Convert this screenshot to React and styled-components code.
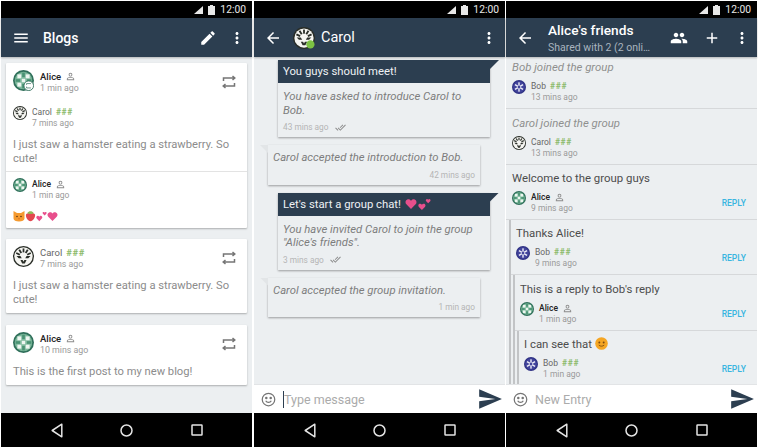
import React from 'react';
import styled, { createGlobalStyle } from 'styled-components';

const GlobalStyle = createGlobalStyle`
  html, body { margin: 0; padding: 0; background: #fff; }
  * { box-sizing: border-box; }
  body { font-family: Roboto, "Liberation Sans", sans-serif; }
`;

const Page = styled.div`
  width: 758px;
  height: 448px;
  padding: 1px;
  display: flex;
  overflow: hidden;
  background: #fff;
`;

const Screen = styled.div`
  width: 251px;
  flex: none;
  display: flex;
  flex-direction: column;
  background: #eceff1;
  &:nth-child(2) { margin: 0 1px 0 2px; }
`;

const StatusBar = styled.div`
  height: 17px;
  flex: none;
  background: #000;
  display: flex;
  align-items: center;
  justify-content: flex-end;
  gap: 5px;
  padding-right: 6px;
  color: #e8e8e8;
  font-size: 10.3px;
  svg { display: block; }
`;

const Toolbar = styled.div`
  height: 39px;
  flex: none;
  background: #2c3e50;
  color: #fff;
  display: flex;
  align-items: center;
  position: relative;
  z-index: 2;
  box-shadow: 0 1px 2px rgba(0, 0, 0, 0.25);
`;

const ToolIcon = styled.svg`
  width: 18px;
  height: 18px;
  fill: #fff;
  flex: none;
  display: block;
`;

const ToolSlot = styled.div`
  width: ${(p) => p.$width}px;
  flex: none;
  display: flex;
  justify-content: center;
`;

const Title = styled.div`
  font-size: 14px;
  font-weight: 500;
  flex: 1;
  min-width: 0;
  margin-left: 2px;
`;

const ContactTitle = styled(Title)`
  margin-left: 6px;
  font-size: 14.5px;
  font-weight: 400;
`;

const ToolAvatar = styled.div`
  flex: none;
  margin-left: 1px;
`;

const GroupTitle = styled.div`
  flex: 1;
  min-width: 0;
  margin-left: 4px;
  padding-top: 2px;
  line-height: 1;
  strong { display: block; font-size: 13.7px; font-weight: 500; margin-bottom: 5px; }
  span { display: block; font-size: 10.5px; color: #a9b4bf; }
`;

const Content = styled.div`
  flex: 1;
  min-height: 0;
  overflow: hidden;
  display: flex;
  flex-direction: column;
`;

const Blogs = styled(Content)`
  padding: 6px 5px 0;
  gap: 11px;
`;

const Card = styled.div`
  background: #fff;
  border-radius: 1px;
  box-shadow: 0 1px 2px rgba(0, 0, 0, 0.28);
  position: relative;
  margin-top: ${(p) => p.$mt || 0}px;
`;

const Section = styled.div`
  padding: ${(p) => p.$pad || '7px 7px 0'};
  & + & { border-top: 1px solid #e3e3e3; }
`;

const Author = styled.div`
  display: flex;
  align-items: flex-start;
  gap: ${(p) => (p.$small ? 5 : 6)}px;
  margin-bottom: ${(p) => p.$mb || 0}px;
`;

const AuthorText = styled.div`
  display: flex;
  flex-direction: column;
  line-height: 1;
  padding-top: ${(p) => (p.$small ? 0.5 : 1)}px;
`;

const AuthorName = styled.div`
  display: flex;
  align-items: center;
  gap: 4px;
  height: 11px;
  font-size: ${(p) => (p.$small ? 8.5 : 9.5)}px;
  font-weight: ${(p) => (p.$bold ? 500 : 400)};
  color: ${(p) => (p.$bold ? '#222' : '#666')};
`;

const Trust = styled.span`
  color: #8dbb6c;
  font-size: ${(p) => (p.$small ? 8.5 : 9.5)}px;
  font-weight: 700;
  letter-spacing: 0.7px;
`;

const Time = styled.div`
  margin-top: ${(p) => (p.$small ? 1.5 : 2)}px;
  font-size: ${(p) => (p.$small ? 8.5 : 8.8)}px;
  color: #9a9a9a;
  height: 10px;
`;

const PostText = styled.div`
  font-size: 11.2px;
  line-height: 14px;
  color: #8c8c8c;
  padding-bottom: ${(p) => p.$pb || 6}px;
`;

const RepostIcon = styled.svg`
  position: absolute;
  right: 10px;
  top: 11px;
  width: 16px;
  height: 16px;
  fill: none;
  stroke: #757575;
  stroke-width: 1.5;
`;

const EmojiLine = styled.div`
  display: flex;
  align-items: center;
  height: 12px;
  svg { display: block; flex: none; }
`;

const Chat = styled(Content)`
  padding: 3px 0 0;
  gap: 8px;
`;

const OutBubble = styled.div`
  width: 212px;
  margin-left: 24px;
  background: #eceff1;
  position: relative;
  box-shadow: 0 1px 2px rgba(0, 0, 0, 0.35);
`;

const BubbleHead = styled.div`
  background: #2c3e50;
  color: #eef1f4;
  height: 23px;
  display: flex;
  align-items: center;
  gap: 4px;
  padding-left: 5px;
  font-size: 11.3px;
  position: relative;
  &::after {
    content: '';
    position: absolute;
    left: 100%;
    top: 0;
    width: 9px;
    height: 9px;
    background: #2c3e50;
    clip-path: polygon(0 0, 100% 0, 0 100%);
  }
`;

const HeadEmoji = styled.span`
  display: flex;
  align-items: center;
  gap: 1px;
`;

const Status = styled.div`
  padding: ${(p) => p.$pad || '7px 5px 0'};
  font-size: 11.3px;
  line-height: 13.5px;
  font-style: italic;
  color: #7d7d7d;
`;

const Meta = styled.div`
  display: flex;
  align-items: center;
  gap: 6px;
  justify-content: ${(p) => (p.$end ? 'flex-end' : 'flex-start')};
  font-size: 8.3px;
  color: #b5b5b5;
  height: 10px;
  padding: 0 5px;
  margin: ${(p) => p.$margin || '5px 0 5px'};
`;

const InBubble = styled.div`
  width: 212px;
  margin-left: 14px;
  background: #eceff1;
  position: relative;
  box-shadow: 0 1px 2px rgba(0, 0, 0, 0.35);
  &::before {
    content: '';
    position: absolute;
    right: 100%;
    top: 0;
    width: 8px;
    height: 8px;
    background: #e2e5e7;
    clip-path: polygon(0 0, 100% 0, 100% 100%);
  }
`;

const Entry = styled.div`
  padding: ${(p) => p.$pad || '6px 6px 0'};
  height: ${(p) => p.$height}px;
  border-bottom: 1px solid #d6d8da;
  position: relative;
  flex: none;
`;

const EntryText = styled.div`
  font-size: 11.4px;
  line-height: 14px;
  margin-bottom: 6px;
  color: ${(p) => (p.$muted ? '#8f8f8f' : '#4d4d4d')};
  font-style: ${(p) => (p.$muted ? 'italic' : 'normal')};
`;

const Reply = styled.div`
  margin-left: ${(p) => (p.$first ? 3 : 2)}px;
  border-left: 2px solid #c2c4c6;
  flex: none;
`;

const ReplyLink = styled.div`
  position: absolute;
  right: 11px;
  bottom: 11px;
  color: #39b5e0;
  font-size: 8.5px;
  font-weight: 500;
`;

const InputBar = styled.div`
  height: 29px;
  flex: none;
  background: #fff;
  border-top: 1px solid #e2e4e6;
  display: flex;
  align-items: center;
  padding: 0 2px 0 7px;
  svg { flex: none; }
`;

const EntryField = styled.div`
  flex: 1;
  font-size: 12.5px;
  color: #ababab;
  margin-left: 7px;
  height: 17px;
  line-height: 17px;
  ${(p) => p.$caret && 'border-left: 1px solid #2c3e50;'}
`;

const NavBar = styled.div`
  height: 34px;
  flex: none;
  background: #000;
  display: grid;
  grid-template-columns: repeat(3, 70px);
  justify-content: center;
  align-items: center;
  justify-items: center;
  svg { display: block; }
`;

const AvatarSvg = styled.svg`
  flex: none;
  display: block;
`;

const InlineEmoji = styled.svg`
  display: inline-block;
  vertical-align: -2px;
`;

const paths = {
  menu: 'M3 18h18v-2H3v2zm0-5h18v-2H3v2zm0-7v2h18V6H3z',
  edit: 'M3 17.25V21h3.75L17.81 9.94l-3.75-3.75L3 17.25zM20.71 7.04c.39-.39.39-1.02 0-1.41l-2.34-2.34c-.39-.39-1.02-.39-1.41 0l-1.83 1.83 3.75 3.75 1.83-1.83z',
  more: 'M12 8c1.1 0 2-.9 2-2s-.9-2-2-2-2 .9-2 2 .9 2 2 2zm0 2c-1.1 0-2 .9-2 2s.9 2 2 2 2-.9 2-2-.9-2-2-2zm0 6c-1.1 0-2 .9-2 2s.9 2 2 2 2-.9 2-2-.9-2-2-2z',
  back: 'M20 11H7.83l5.59-5.59L12 4l-8 8 8 8 1.41-1.41L7.83 13H20v-2z',
  group: 'M16 11c1.66 0 2.99-1.34 2.99-3S17.66 5 16 5c-1.66 0-3 1.34-3 3s1.34 3 3 3zm-8 0c1.66 0 2.99-1.34 2.99-3S9.66 5 8 5C6.34 5 5 6.34 5 8s1.34 3 3 3zm0 2c-2.33 0-7 1.17-7 3.5V19h14v-2.5c0-2.33-4.67-3.5-7-3.5zm8 0c-.29 0-.62.02-.97.05 1.16.84 1.97 1.97 1.97 3.45V19h6v-2.5c0-2.33-4.67-3.5-7-3.5z',
  add: 'M19 13h-6v6h-2v-6H5v-2h6V5h2v6h6v2z',
  person: 'M12 5.9c1.16 0 2.1.94 2.1 2.1s-.94 2.1-2.1 2.1S9.9 9.16 9.9 8s.94-2.1 2.1-2.1m0 9c2.97 0 6.1 1.46 6.1 2.1v1.1H5.9V17c0-.64 3.13-2.1 6.1-2.1M12 4C9.79 4 8 5.79 8 8s1.79 4 4 4 4-1.79 4-4-1.79-4-4-4zm0 9c-2.67 0-8 1.34-8 4v3h16v-3c0-2.66-5.33-4-8-4z',
  done: 'M18 7l-1.41-1.41-6.34 6.34 1.41 1.41L18 7zm4.24-1.41L11.66 16.17 7.48 12l-1.41 1.41L11.66 19l12-12-1.42-1.41zM.41 13.41L6 19l1.41-1.41L1.83 12 .41 13.41z',
  send: 'M2.01 21L23 12 2.01 3 2 10l15 2-15 2z',
};

const heart = 'M6 11 1.4 6.300C-.1 4.700.4 2.200 2.300 1.500 3.800.9 5.200 1.500 6 2.800 6.800 1.500 8.200.9 9.700 1.500c1.900.7 2.400 3.200.9 4.800z';

function Tool({ name }) {
  return (
    <ToolIcon viewBox="0 0 24 24">
      <path d={paths[name]} />
    </ToolIcon>
  );
}

function Alice({ size, badge }) {
  return (
    <AvatarSvg width={size} height={size} viewBox="0 0 24 24">
      <circle cx="12" cy="12" r="12" fill="#2f6f5a" />
      <circle cx="12" cy="12" r="10" fill="#7db99c" />
      <g fill="#eef6f1">
        <rect x="5" y="5" width="4.500" height="4.500" />
        <rect x="14.500" y="5" width="4.500" height="4.500" />
        <rect x="5" y="14.500" width="4.500" height="4.500" />
        <rect x="14.500" y="14.500" width="4.500" height="4.500" />
        <rect x="10" y="10" width="4" height="4" />
      </g>
      <g fill="#4a9274">
        <rect x="10.500" y="3" width="3" height="5" />
        <rect x="10.500" y="16" width="3" height="5" />
        <rect x="3" y="10.500" width="5" height="3" />
        <rect x="16" y="10.500" width="5" height="3" />
      </g>
      {badge}
    </AvatarSvg>
  );
}

function Carol({ size, badge }) {
  const ticks = [-64, -32, 0, 32, 64];
  return (
    <AvatarSvg width={size} height={size} viewBox="0 0 24 24">
      <circle cx="12" cy="12" r="12" fill="#2a2e28" />
      <circle cx="12" cy="12" r="10.500" fill="#f6f6f2" />
      <g fill="#2a2e28">
        {ticks.map((a) => (
          <rect key={a} x="11" y="2.800" width="2" height="4.500" transform={`rotate(${a} 12 12)`} />
        ))}
        <path d="M4 11.500h4.500l1.500 2.500H6.500zM20 11.500h-4.500L14 14h3.500z" />
        <path d="M8.500 16h2.500l1 2 1-2h2.500l-2 4h-3z" />
      </g>
      {badge}
    </AvatarSvg>
  );
}

function Bob({ size }) {
  const arms = [0, 60, 120, 180, 240, 300];
  return (
    <AvatarSvg width={size} height={size} viewBox="0 0 24 24">
      <circle cx="12" cy="12" r="12" fill="#2f3184" />
      <circle cx="12" cy="12" r="10" fill="#43459c" />
      <g fill="#eeeef8">
        {arms.map((a) => (
          <rect key={a} x="10.800" y="4" width="2.400" height="6" transform={`rotate(${a} 12 12)`} />
        ))}
      </g>
      <circle cx="12" cy="12" r="2" fill="#43459c" />
    </AvatarSvg>
  );
}

function CatEmoji() {
  return (
    <svg width="12" height="12" viewBox="0 0 12 12">
      <path d="M.5 1 4 3h4l3.500-2v7.500C11.500 10.500 9 11.500 6 11.500S.5 10.500.5 8.500z" fill="#f59a2f" />
      <circle cx="4" cy="6.500" r=".8" fill="#5b3310" />
      <circle cx="8" cy="6.500" r=".8" fill="#5b3310" />
      <path d="M5 8.500h2L6 9.500z" fill="#c2571a" />
    </svg>
  );
}

function StrawberryEmoji() {
  return (
    <svg width="11" height="12" viewBox="0 0 12 12">
      <path d="M6 11.800C3 11.300.8 8 1 5 1.100 3 3 2.600 6 2.600s4.900.4 5 2.400c.2 3-2 6.300-5 6.800z" fill="#e3484f" />
      <path d="M2.500 3C4 .2 8 .2 9.500 3 8 4.200 4 4.200 2.500 3z" fill="#8dbb5c" />
    </svg>
  );
}

function Hearts({ size = 11 }) {
  return (
    <svg width={size} height={size} viewBox="0 0 24 24">
      <g fill="#e84f8c">
        <path transform="translate(0 9) scale(1.200)" d={heart} />
        <path transform="translate(14 1) scale(.800)" d={heart} />
      </g>
    </svg>
  );
}

function Heart({ size = 10 }) {
  return (
    <svg width={size} height={size} viewBox="0 0 12 12">
      <path fill="#e84f8c" d={heart} />
    </svg>
  );
}

function SmileEmoji() {
  return (
    <InlineEmoji width="13" height="13" viewBox="0 0 12 12">
      <circle cx="6" cy="6" r="5.800" fill="#f5a623" />
      <circle cx="4" cy="5" r=".9" fill="#7a4a10" />
      <circle cx="8" cy="5" r=".9" fill="#7a4a10" />
      <path d="M3.500 7.500c1.500 1.300 3.500 1.300 5 0" stroke="#7a4a10" strokeWidth=".8" fill="none" />
    </InlineEmoji>
  );
}

function Repost() {
  return (
    <RepostIcon viewBox="0 0 16 16">
      <path d="M2.500 7V4h10.500M11.500 2l2.300 2-2.300 2" />
      <path d="M13.500 9v3H3M4.500 10 2.200 12l2.300 2" />
    </RepostIcon>
  );
}

function Person() {
  return (
    <svg width="11" height="11" viewBox="0 0 24 24" fill="#8a8a8a">
      <path d={paths.person} />
    </svg>
  );
}

function Name({ who, small }) {
  if (who === 'Alice') {
    return (
      <AuthorName $small={small} $bold>
        Alice <Person />
      </AuthorName>
    );
  }
  return (
    <AuthorName $small={small}>
      {who} <Trust $small={small}>###</Trust>
    </AuthorName>
  );
}

const avatars = { Alice, Carol, Bob };

function AuthorRow({ who, time, size = 21, small, mb, badge }) {
  const Avatar = avatars[who];
  return (
    <Author $small={small} $mb={mb}>
      <Avatar size={size} badge={badge} />
      <AuthorText $small={small}>
        <Name who={who} small={small} />
        <Time $small={small}>{time}</Time>
      </AuthorText>
    </Author>
  );
}

function Shell({ toolbar, children }) {
  return (
    <Screen>
      <StatusBar>
        <svg width="9" height="8" viewBox="0 0 9 8">
          <path d="M9 0v8H0z" fill="#e8e8e8" />
        </svg>
        <svg width="7" height="10" viewBox="0 0 7 10">
          <path d="M2 0h3v1h2v9H0V1h2z" fill="#e8e8e8" />
        </svg>
        <span>12:00</span>
      </StatusBar>
      <Toolbar>{toolbar}</Toolbar>
      {children}
      <NavBar>
        <svg width="12" height="15" viewBox="0 0 12 15">
          <path d="M10.800 1.200v12.600L1.200 7.500z" fill="none" stroke="#e4e4e4" strokeWidth="1.500" strokeLinejoin="round" />
        </svg>
        <svg width="13" height="13" viewBox="0 0 13 13">
          <circle cx="6.500" cy="6.500" r="5.500" fill="none" stroke="#e4e4e4" strokeWidth="1.500" />
        </svg>
        <svg width="12" height="12" viewBox="0 0 12 12">
          <rect x="1" y="1" width="10" height="10" rx=".5" fill="none" stroke="#e4e4e4" strokeWidth="1.500" />
        </svg>
      </NavBar>
    </Screen>
  );
}

function Input({ label, caret }) {
  return (
    <InputBar>
      <svg width="15" height="15" viewBox="0 0 24 24" fill="none" stroke="#757575" strokeWidth="2">
        <circle cx="12" cy="12" r="10" />
        <circle cx="8.500" cy="9.500" r="1" fill="#757575" />
        <circle cx="15.500" cy="9.500" r="1" fill="#757575" />
        <path d="M7.500 14c2 3.500 7 3.500 9 0" />
      </svg>
      <EntryField $caret={caret}>{label}</EntryField>
      <svg width="26" height="26" viewBox="0 0 24 24" fill="#2c3e50">
        <path d={paths.send} />
      </svg>
    </InputBar>
  );
}

const blogPost = 'I just saw a hamster eating a strawberry. So cute!';

function BlogsScreen() {
  const badge = (
    <g>
      <circle cx="18" cy="18" r="5.500" fill="#fff" stroke="#2f6f5a" />
      <path d="M15.500 17v-1.500h5M15.500 19v1.500h5" fill="none" stroke="#2f6f5a" strokeWidth=".8" />
    </g>
  );
  return (
    <Shell
      toolbar={
        <>
          <ToolSlot $width={40}><Tool name="menu" /></ToolSlot>
          <Title>Blogs</Title>
          <ToolSlot $width={27}><Tool name="edit" /></ToolSlot>
          <ToolSlot $width={31}><Tool name="more" /></ToolSlot>
        </>
      }
    >
      <Blogs>
        <Card>
          <Repost />
          <Section>
            <AuthorRow who="Alice" time="1 min ago" badge={badge} mb={12} />
            <AuthorRow who="Carol" time="7 mins ago" size={14} small mb={9} />
            <PostText $pb={5}>{blogPost}</PostText>
          </Section>
          <Section $pad="6px 7px 6px">
            <AuthorRow who="Alice" time="1 min ago" size={14} small mb={9} />
            <EmojiLine>
              <CatEmoji />
              <StrawberryEmoji />
              <Hearts />
              <Heart size={11} />
            </EmojiLine>
          </Section>
        </Card>
        <Card>
          <Repost />
          <Section>
            <AuthorRow who="Carol" time="7 mins ago" mb={9} />
            <PostText>{blogPost}</PostText>
          </Section>
        </Card>
        <Card $mt={1}>
          <Repost />
          <Section>
            <AuthorRow who="Alice" time="10 mins ago" mb={9} />
            <PostText>This is the first post to my new blog!</PostText>
          </Section>
        </Card>
      </Blogs>
    </Shell>
  );
}

function ChatScreen() {
  const dot = <circle cx="19" cy="19" r="4.500" fill="#7cc243" />;
  const done = (
    <svg width="11" height="11" viewBox="0 0 24 24" fill="#8a8a8a">
      <path d={paths.done} />
    </svg>
  );
  return (
    <Shell
      toolbar={
        <>
          <ToolSlot $width={38}><Tool name="back" /></ToolSlot>
          <ToolAvatar><Carol size={22} badge={dot} /></ToolAvatar>
          <ContactTitle>Carol</ContactTitle>
          <ToolSlot $width={32}><Tool name="more" /></ToolSlot>
        </>
      }
    >
      <Chat>
        <OutBubble>
          <BubbleHead>You guys should meet!</BubbleHead>
          <Status>You have asked to introduce Carol to Bob.</Status>
          <Meta>43 mins ago {done}</Meta>
        </OutBubble>
        <InBubble>
          <Status $pad="6px 5px 0">Carol accepted the introduction to Bob.</Status>
          <Meta $end>42 mins ago</Meta>
        </InBubble>
        <OutBubble>
          <BubbleHead>
            Let's start a group chat!
            <HeadEmoji>
              <Heart size={12} />
              <Hearts size={13} />
            </HeadEmoji>
          </BubbleHead>
          <Status>You have invited Carol to join the group "Alice's friends".</Status>
          <Meta>3 mins ago {done}</Meta>
        </OutBubble>
        <InBubble>
          <Status $pad="6px 5px 0">Carol accepted the group invitation.</Status>
          <Meta $end>1 min ago</Meta>
        </InBubble>
      </Chat>
      <Input label="Type message" caret />
    </Shell>
  );
}

function GroupScreen() {
  return (
    <Shell
      toolbar={
        <>
          <ToolSlot $width={38}><Tool name="back" /></ToolSlot>
          <GroupTitle>
            <strong>Alice's friends</strong>
            <span>Shared with 2 (2 onli…</span>
          </GroupTitle>
          <ToolSlot $width={38}><Tool name="group" /></ToolSlot>
          <ToolSlot $width={28}><Tool name="add" /></ToolSlot>
          <ToolSlot $width={31}><Tool name="more" /></ToolSlot>
        </>
      }
    >
      <Content>
        <Entry $height={52} $pad="3px 6px 0">
          <EntryText $muted>Bob joined the group</EntryText>
          <AuthorRow who="Bob" time="13 mins ago" size={14} small />
        </Entry>
        <Entry $height={56} $pad="7px 6px 0">
          <EntryText $muted>Carol joined the group</EntryText>
          <AuthorRow who="Carol" time="13 mins ago" size={14} small />
        </Entry>
        <Entry $height={55}>
          <EntryText>Welcome to the group guys</EntryText>
          <AuthorRow who="Alice" time="9 mins ago" size={14} small />
          <ReplyLink>REPLY</ReplyLink>
        </Entry>
        <Reply $first>
          <Entry $height={55} $pad="6px 6px 0 5px">
            <EntryText>Thanks Alice!</EntryText>
            <AuthorRow who="Bob" time="9 mins ago" size={14} small />
            <ReplyLink>REPLY</ReplyLink>
          </Entry>
          <Reply>
            <Entry $height={56} $pad="7px 6px 0 5px">
              <EntryText>This is a reply to Bob's reply</EntryText>
              <AuthorRow who="Alice" time="1 min ago" size={14} small />
              <ReplyLink>REPLY</ReplyLink>
            </Entry>
            <Reply>
              <Entry $height={55} $pad="6px 6px 0 5px">
                <EntryText>I can see that <SmileEmoji /></EntryText>
                <AuthorRow who="Bob" time="1 min ago" size={14} small />
                <ReplyLink>REPLY</ReplyLink>
              </Entry>
            </Reply>
          </Reply>
        </Reply>
      </Content>
      <Input label="New Entry" />
    </Shell>
  );
}

export default function App() {
  return (
    <>
      <GlobalStyle />
      <Page>
        <BlogsScreen />
        <ChatScreen />
        <GroupScreen />
      </Page>
    </>
  );
}
